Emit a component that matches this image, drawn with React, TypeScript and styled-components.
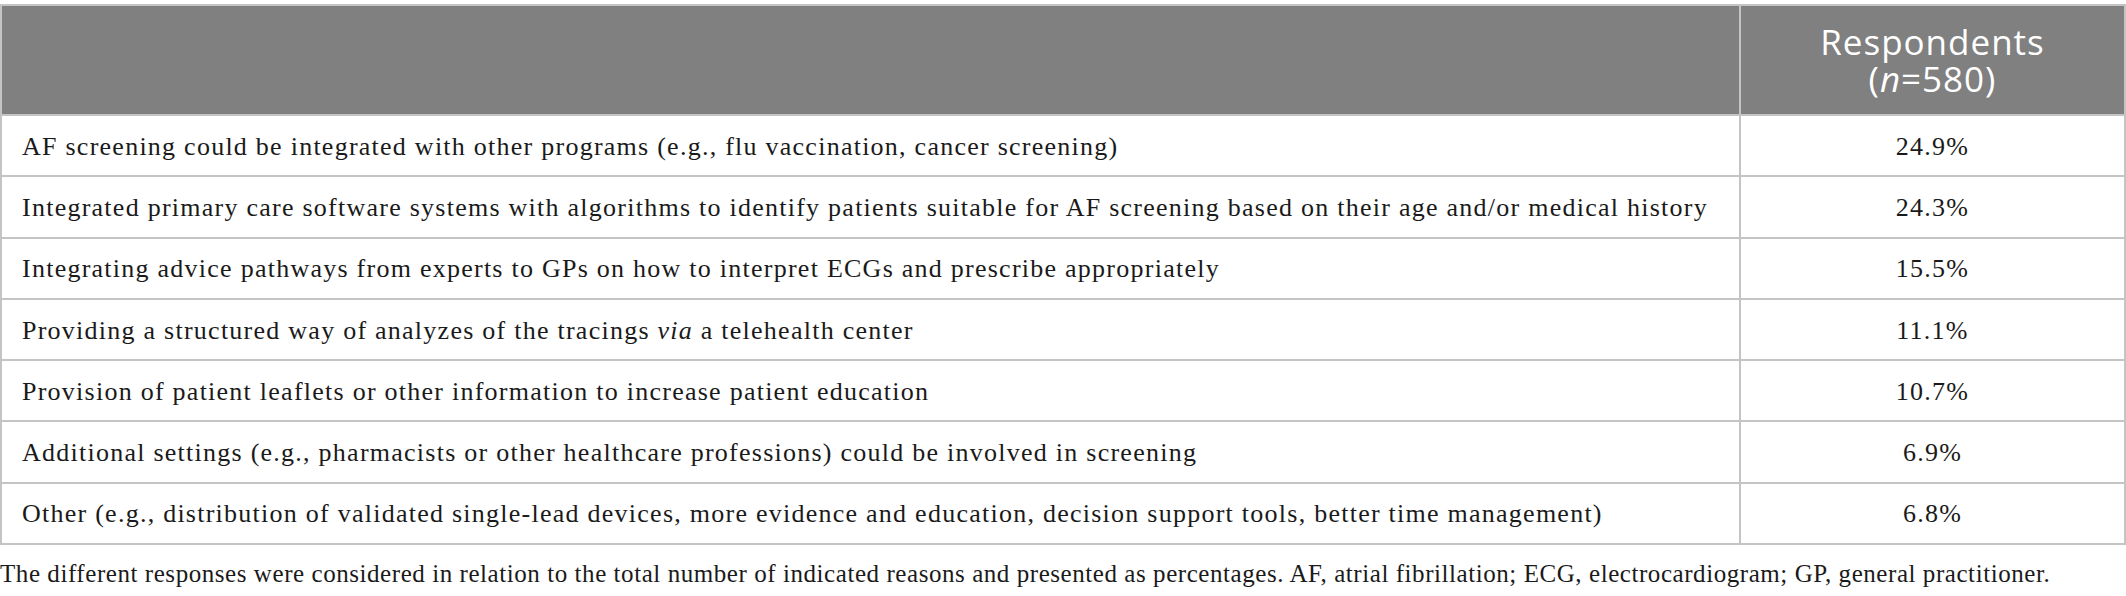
import React from 'react';
import styled, { createGlobalStyle } from 'styled-components';

const GlobalStyle = createGlobalStyle`
  html, body {
    margin: 0;
    padding: 0;
    background: #ffffff;
  }
`;

const Wrapper = styled.div`
  width: 2126px;
  padding-top: 4px;
  font-family: 'Liberation Serif', 'Times New Roman', serif;
  color: #1a1a1a;
`;

const Table = styled.table`
  width: 100%;
  border-collapse: collapse;
  table-layout: fixed;
`;

const HeadCell = styled.th<{ $wide?: boolean }>`
  background: #7f807f;
  color: #ffffff;
  height: 108px;
  padding: 0;
  border: 2px solid #c4c4c4;
  font-family: 'Open Sans', 'Liberation Sans', sans-serif;
  font-weight: 400;
  font-size: 35px;
  letter-spacing: 1px;
  line-height: 37px;
  text-align: center;
  width: ${(p) => (p.$wide ? 'auto' : '383px')};
`;

const Cell = styled.td<{ $center?: boolean }>`
  height: 57.3px;
  padding: 2px 0 0 ${(p) => (p.$center ? '0' : '20px')};
  border: 2px solid #c4c4c4;
  font-size: 26px;
  letter-spacing: 1.25px;
  text-align: ${(p) => (p.$center ? 'center' : 'left')};
  vertical-align: middle;
  white-space: nowrap;
`;

const Footnote = styled.p`
  margin: 15px 0 0;
  font-size: 25px;
  letter-spacing: 0.56px;
  white-space: nowrap;
  color: #1a1a1a;
`;

const rows: { label: React.ReactNode; value: string }[] = [
  {
    label:
      'AF screening could be integrated with other programs (e.g., flu vaccination, cancer screening)',
    value: '24.9%',
  },
  {
    label:
      'Integrated primary care software systems with algorithms to identify patients suitable for AF screening based on their age and/or medical history',
    value: '24.3%',
  },
  {
    label:
      'Integrating advice pathways from experts to GPs on how to interpret ECGs and prescribe appropriately',
    value: '15.5%',
  },
  {
    label: (
      <>
        Providing a structured way of analyzes of the tracings <i>via</i> a telehealth center
      </>
    ),
    value: '11.1%',
  },
  {
    label: 'Provision of patient leaflets or other information to increase patient education',
    value: '10.7%',
  },
  {
    label:
      'Additional settings (e.g., pharmacists or other healthcare professions) could be involved in screening',
    value: '6.9%',
  },
  {
    label:
      'Other (e.g., distribution of validated single-lead devices, more evidence and education, decision support tools, better time management)',
    value: '6.8%',
  },
];

export default function App() {
  return (
    <>
      <GlobalStyle />
      <Wrapper>
        <Table>
          <thead>
            <tr>
              <HeadCell $wide />
              <HeadCell>
                Respondents
                <br />(<i>n</i>=580)
              </HeadCell>
            </tr>
          </thead>
          <tbody>
            {rows.map((r, i) => (
              <tr key={i}>
                <Cell>{r.label}</Cell>
                <Cell $center>{r.value}</Cell>
              </tr>
            ))}
          </tbody>
        </Table>
        <Footnote>
          The different responses were considered in relation to the total number of indicated
          reasons and presented as percentages. AF, atrial fibrillation; ECG, electrocardiogram; GP,
          general practitioner.
        </Footnote>
      </Wrapper>
    </>
  );
}
